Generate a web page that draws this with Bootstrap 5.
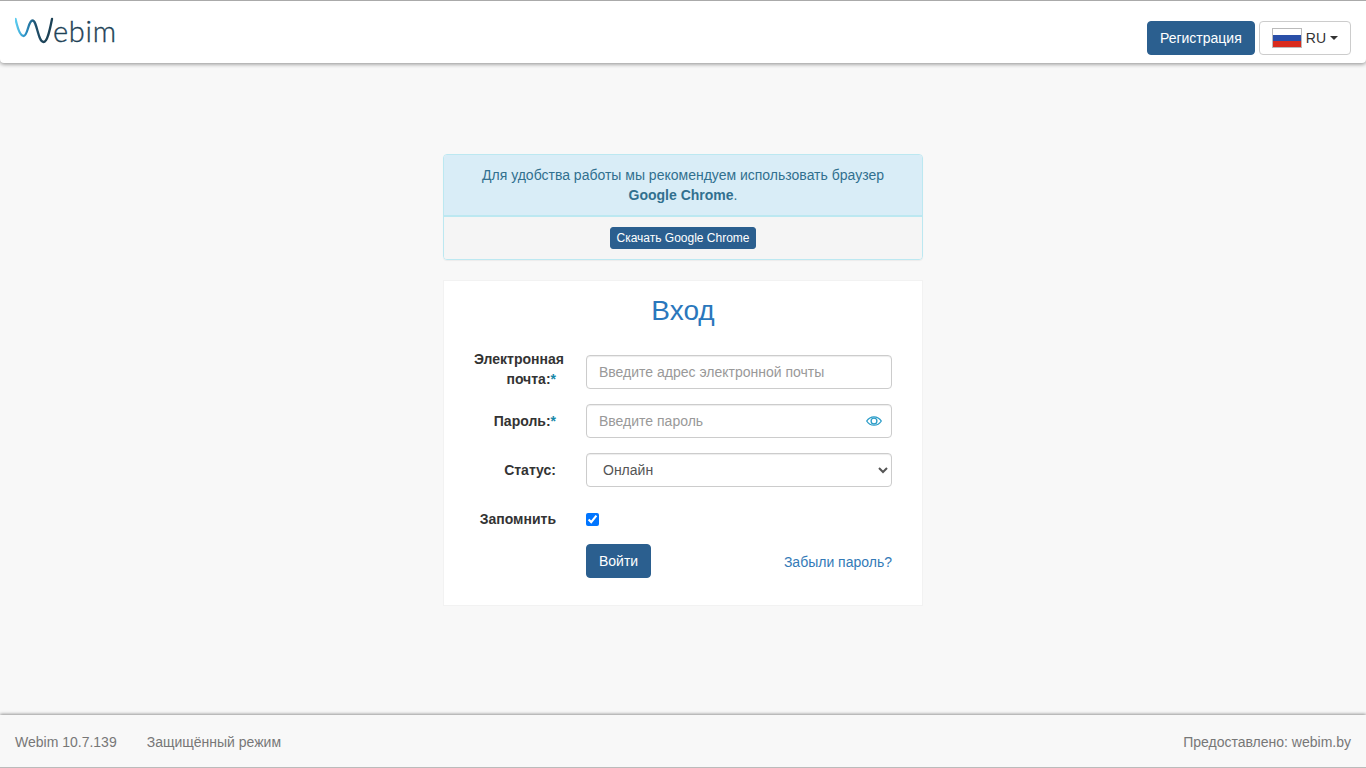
<!DOCTYPE html>
<html lang="ru">
<head>
<meta charset="utf-8">
<title>Webim</title>
<link href="https://cdn.jsdelivr.net/npm/bootstrap@5.3.0/dist/css/bootstrap.min.css" rel="stylesheet">
<style>
html,body{height:100%}
body{font-family:"Liberation Sans",Arial,sans-serif;font-size:14px;line-height:20px;color:#333;background:#f8f8f8}
.wm-page{height:768px;overflow:hidden}
.wm-head{height:63px;background:#fff;border-top:1px solid #aaa;border-radius:0 0 4px 4px;box-shadow:0 1px 4px rgba(0,0,0,.45);padding:0 15px;position:relative}
.wm-logo{display:block;margin-top:10px}
.wm-logo text{font-family:Lato,sans-serif;font-weight:300;font-size:29px;fill:#1d4256;stroke:#1d4256;stroke-width:.35}
.wm-actions{padding-top:20px}
.wm-btn{background:#2b5f8f;border:1px solid #2b5f8f;color:#fff;font-size:14px;line-height:20px;padding:6px 12px;border-radius:4px}
.wm-btn:hover{background:#2b5f8f;color:#fff}
.wm-lang{display:flex;align-items:center;height:34px;background:#fff;border:1px solid #ccc;color:#333;font-size:14px;padding:0 12px;border-radius:4px}
.wm-flag{width:30px;height:20px;border:1px solid #bbb;margin-right:4px;display:block}
.wm-caret{width:0;height:0;border-left:4px solid transparent;border-right:4px solid transparent;border-top:4px solid #333;margin-left:4px}
.wm-main{width:480px;padding-top:91px}
.wm-notice{border:1px solid #bce8f1;border-radius:4px;height:106px;box-shadow:0 1px 1px rgba(0,0,0,.05);overflow:hidden}
.wm-notice-top{background:#d9edf7;color:#31708f;padding:10px 15px;border-bottom:2px solid #bce8f1;height:62px}
.wm-notice-bot{background:#f5f5f5;padding:10px 15px;height:42px}
.wm-xs{display:inline-block;background:#2b5f8f;color:#fff;font-size:12px;line-height:18px;padding:1px 5px;border:1px solid #2b5f8f;border-radius:3px;vertical-align:top;text-decoration:none}
.wm-panel{margin-top:20px;background:#fff;border:1px solid #f2f2f2;height:326px;padding:13px 15px 0}
.wm-title{font-family:"Liberation Sans",Arial,sans-serif;font-size:28px;line-height:33px;color:#2a77bc;text-align:center;font-weight:400;margin:0 0 22px}
.wm-form .row{margin:0 0 15px;width:448px}
.wm-lab{width:112px;padding:0 15px;text-align:right;font-weight:700;flex:none;margin:0}
.wm-field{width:336px;padding:0 15px;flex:none}
.wm-input{height:34px;border:1px solid #ccc;border-radius:4px;padding:6px 12px;font-size:14px;line-height:20px;color:#555;box-shadow:inset 0 1px 1px rgba(0,0,0,.075)}
.wm-input::placeholder{color:#999;opacity:1}
select.wm-input{appearance:auto;-webkit-appearance:menulist;background:#fff}
.wm-eye{position:absolute;right:10px;top:10px;display:block}
.wm-star{color:#1788a8}
.wm-check{display:block;margin:11px 0 0;width:13px;height:13px}
.wm-checkrow{height:27px}
.wm-checkrow .wm-lab{padding-top:7px}
.wm-link{color:#337ab7;text-decoration:none;margin-top:8px}
.wm-foot{height:53px;background:#f8f8f8;border-bottom:1px solid #bbb;box-shadow:0 -1px 3px rgba(0,0,0,.4);padding:2px 15px 0;color:#777}
.wm-gap30{margin-left:30px}
</style>
</head>
<body>
<div class="wm-page d-flex flex-column">
  <header class="wm-head d-flex justify-content-between flex-shrink-0">
    <svg class="wm-logo" width="104" height="40" viewBox="15 11 104 40">
      <defs><linearGradient id="wmg" x1="15" y1="0" x2="45" y2="0" gradientUnits="userSpaceOnUse"><stop offset="0" stop-color="#5fd0f2"/><stop offset=".35" stop-color="#2a8fc4"/><stop offset=".7" stop-color="#1f4f6b"/><stop offset="1" stop-color="#1d4256"/></linearGradient></defs>
      <path d="M15.500 19C17.500 28 20 36 23.500 36C28 36 28 20.500 32.500 20.500C37 20.500 38 42 43.500 42C47.500 42 50 29 52 19" fill="none" stroke="url(#wmg)" stroke-width="2.300" stroke-linecap="round"/>
      <text x="53" y="42" textLength="63" lengthAdjust="spacing">ebim</text>
    </svg>
    <div class="wm-actions d-flex align-items-start gap-1">
      <a class="btn wm-btn" href="#">Регистрация</a>
      <button class="wm-lang" type="button">
        <svg class="wm-flag" viewBox="0 0 28 18" preserveAspectRatio="none"><rect width="28" height="6" fill="#fff"/><rect y="6" width="28" height="6" fill="#2a4fa8"/><rect y="12" width="28" height="6" fill="#d92c1e"/></svg>
        RU<span class="wm-caret"></span>
      </button>
    </div>
  </header>
  <main class="flex-grow-1">
    <div class="wm-main mx-auto">
      <div class="wm-notice">
        <div class="wm-notice-top text-center">Для удобства работы мы рекомендуем использовать браузер <b>Google Chrome</b>.</div>
        <div class="wm-notice-bot text-center"><a class="wm-xs" href="#">Скачать Google Chrome</a></div>
      </div>
      <div class="wm-panel">
        <h1 class="wm-title">Вход</h1>
        <form class="wm-form">
          <div class="row d-flex align-items-end">
            <label class="wm-lab">Электронная почта:<span class="wm-star">*</span></label>
            <div class="wm-field"><input class="form-control wm-input" type="text" placeholder="Введите адрес электронной почты"></div>
          </div>
          <div class="row d-flex align-items-center">
            <label class="wm-lab">Пароль:<span class="wm-star">*</span></label>
            <div class="wm-field"><div class="position-relative">
              <input class="form-control wm-input" type="password" placeholder="Введите пароль">
              <svg class="wm-eye" width="16" height="14" viewBox="0 0 16 14" fill="none" stroke="#2a9cc8" stroke-width="1.300"><path d="M.7 7C2.500 4.200 5 2.800 8 2.800s5.500 1.400 7.300 4.200C13.500 9.800 11 11.200 8 11.200S2.500 9.800.7 7Z"/><circle cx="8" cy="7" r="2.900"/></svg>
            </div></div>
          </div>
          <div class="row d-flex align-items-center">
            <label class="wm-lab">Статус:</label>
            <div class="wm-field"><select class="form-control wm-input"><option>Онлайн</option></select></div>
          </div>
          <div class="row d-flex align-items-start wm-checkrow">
            <label class="wm-lab">Запомнить</label>
            <div class="wm-field"><input class="wm-check" type="checkbox" checked></div>
          </div>
          <div class="row d-flex">
            <div class="wm-lab"></div>
            <div class="wm-field d-flex justify-content-between align-items-start">
              <button class="btn wm-btn" type="button">Войти</button>
              <a class="wm-link" href="#">Забыли пароль?</a>
            </div>
          </div>
        </form>
      </div>
    </div>
  </main>
  <footer class="wm-foot d-flex align-items-center justify-content-between flex-shrink-0">
    <div class="d-flex"><span>Webim 10.7.139</span><span class="wm-gap30">Защищённый режим</span></div>
    <span>Предоставлено: webim.by</span>
  </footer>
</div>
<script src="https://cdn.jsdelivr.net/npm/bootstrap@5.3.0/dist/js/bootstrap.bundle.min.js"></script>
</body>
</html>
